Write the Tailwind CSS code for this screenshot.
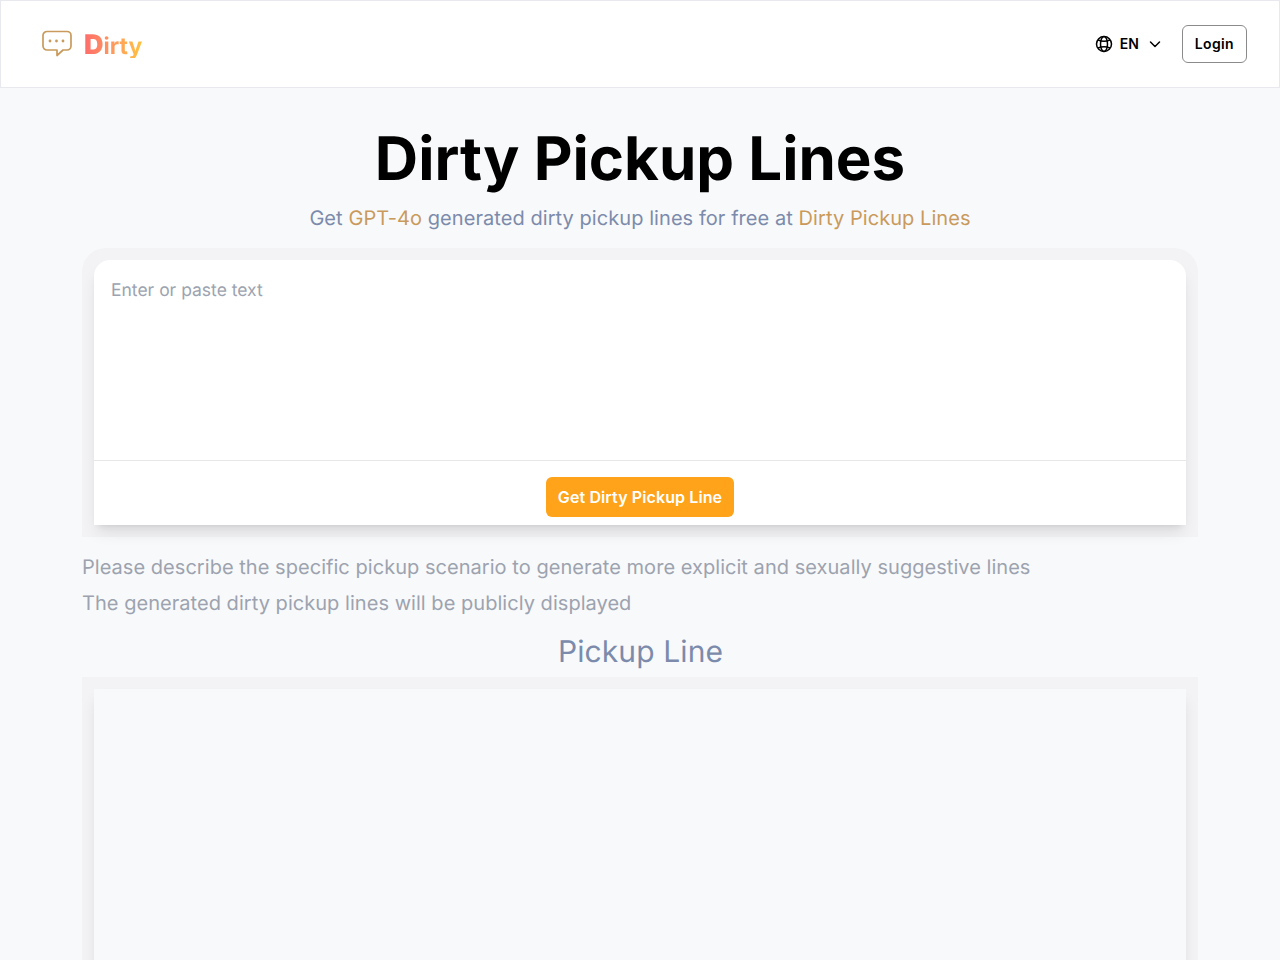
<!DOCTYPE html>
<html lang="en">
<head>
  <meta charset="UTF-8" />
  <meta name="viewport" content="width=device-width, initial-scale=1.0"/>
  <title>Dirty Pickup Lines</title>
  <script src="https://cdn.jsdelivr.net/npm/@tailwindcss/browser@4"></script>
</head>
<body class="bg-[#f8f9fb] font-['Inter',sans-serif] text-black [text-rendering:geometricPrecision]">
  <!-- header -->
  <header class="h-[88px] bg-white border border-[#e8e9ee] flex items-center justify-between pl-[41px] pr-[32px]">
    <a class="flex items-center gap-[11px]">
      <svg width="31" height="28" viewBox="0 0 31 28" fill="none" stroke="#c99a5b" stroke-width="1.700" stroke-linejoin="round">
        <path d="M5 1.500h20a4 4 0 0 1 4 4v10.500a4 4 0 0 1-4 4h-4l-6 5.500v-5.500h-10a4 4 0 0 1-4-4v-10.500a4 4 0 0 1 4-4z"/>
        <circle cx="8" cy="11" r="1.400" fill="#c99a5b" stroke="none"/>
        <circle cx="14.500" cy="11" r="1.400" fill="#c99a5b" stroke="none"/>
        <circle cx="21" cy="11" r="1.400" fill="#c99a5b" stroke="none"/>
      </svg>
      <span class="font-bold text-[23px] leading-none bg-gradient-to-r from-[#ff6b6b] to-[#ffc23f] bg-clip-text text-transparent"><span class="text-[27px] font-black">D</span>irty</span>
    </a>
    <div class="flex items-center gap-[19px]">
      <button class="flex items-center text-sm font-semibold">
        <svg class="mr-[7px]" width="18" height="18" viewBox="0 0 18 18" fill="none" stroke="#000" stroke-width="1.500">
          <circle cx="9" cy="9" r="7.500"/>
          <ellipse cx="9" cy="9" rx="3.500" ry="7.500"/>
          <path d="M3 5c3.500 1.500 8.500 1.500 12 0M3 13c3.500-1.500 8.500-1.500 12 0"/>
        </svg>
        <span class="mr-2">EN</span>
        <svg width="16" height="16" viewBox="0 0 16 16" fill="none" stroke="#000" stroke-width="1.500" stroke-linecap="round" stroke-linejoin="round">
          <path d="M3.500 6l4.500 4.500 4.500-4.500"/>
        </svg>
      </button>
      <button class="h-[38px] px-3 border border-[#8b8b8b] rounded-md text-sm font-semibold tracking-wide">Login</button>
    </div>
  </header>

  <main class="w-[1116px] mx-auto">
    <h1 class="text-[60px] leading-[72px] font-bold text-center mt-[35px]">Dirty Pickup Lines</h1>
    <p class="text-xl leading-7 text-center text-[#7c8bab] mt-[9px] tracking-[0.065px]">Get <span class="text-[#c99a5b]">GPT-4o</span> generated dirty pickup lines for free at <span class="text-[#c99a5b]">Dirty Pickup Lines</span></p>

    <div class="mt-4 p-3 bg-[#f3f3f5] rounded-t-3xl">
      <div class="bg-white rounded-t-2xl shadow-lg">
        <div class="h-[201px] px-[17px] pt-[19px] border-b border-[#e5e7eb] text-[17.500px] leading-6 text-[#9ca3af]">Enter or paste text</div>
        <div class="h-[64px] flex justify-center items-start pt-4">
          <button class="h-10 px-3 rounded-md bg-[#ffa31a] text-white text-base font-semibold tracking-[0.1px]">Get Dirty Pickup Line</button>
        </div>
      </div>
    </div>

    <div class="mt-3 text-xl leading-9 text-[#9ca3af] tracking-[0.04px]">
      <p>Please describe the specific pickup scenario to generate more explicit and sexually suggestive lines</p>
      <p>The generated dirty pickup lines will be publicly displayed</p>
    </div>

    <h2 class="text-[30px] leading-9 text-center text-[#7c8bab] mt-[13px] pl-[1px] tracking-[0.1px]">Pickup Line</h2>
    <div class="mt-[7px] p-3 bg-[#f3f3f5]">
      <div class="h-[600px] bg-[#f8f9fb] shadow-lg"></div>
    </div>
  </main>
</body>
</html>
